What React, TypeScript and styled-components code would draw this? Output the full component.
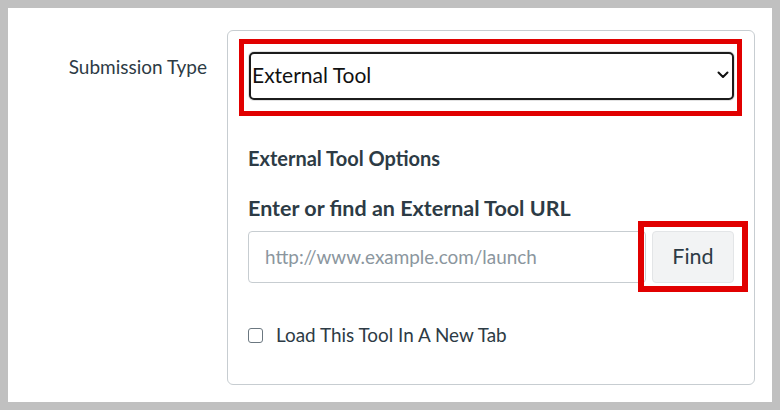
import React from 'react';
import styled, { createGlobalStyle } from 'styled-components';

const GlobalStyle = createGlobalStyle`
  html, body { margin: 0; padding: 0; background: #c0c0c0; }
  body { font-family: Lato, "Noto Sans", sans-serif; color: #2d3b45; }
  * { box-sizing: border-box; }
`;

const Frame = styled.div`
  width: 780px;
  height: 410px;
  padding: 8px;
  background: #c0c0c0;
`;

const Page = styled.div`
  background: #ffffff;
  height: 394px;
  display: grid;
  grid-template-columns: 199px 528px;
  column-gap: 20px;
  align-items: start;
  padding-top: 22px;
`;

const FieldLabel = styled.div`
  text-align: right;
  font-size: 19px;
  line-height: 24px;
  padding-top: 25px;
  color: #2d3b45;
`;

const Card = styled.div`
  height: 355px;
  border: 1px solid #c7cdd1;
  border-radius: 6px;
  padding: 21px 20px 0 20px;
  display: flex;
  flex-direction: column;
`;

const SelectWrap = styled.div`
  position: relative;
  height: 48px;
  margin-left: 1px;
`;

const Select = styled.select`
  appearance: none;
  width: 100%;
  height: 48px;
  border: 2px solid #1c1c1c;
  border-radius: 5px;
  box-shadow: 0 0 0 1px #e2e2e2;
  background: #fff;
  font-family: Lato, "Noto Sans", sans-serif;
  font-size: 21px;
  color: #111;
  padding: 0 30px 3px 1px;
  outline: none;
`;

const Chevron = styled.svg`
  position: absolute;
  right: 5px;
  top: 18px;
  width: 12px;
  height: 10px;
  pointer-events: none;
`;

const Highlight = styled.div<{ $t: number; $r: number; $b: number; $l: number; $w: number }>`
  position: absolute;
  top: ${(p) => p.$t}px;
  right: ${(p) => p.$r}px;
  bottom: ${(p) => p.$b}px;
  left: ${(p) => p.$l}px;
  border: ${(p) => p.$w}px solid #e10000;
  pointer-events: none;
`;

const SectionTitle = styled.div`
  margin-top: 46px;
  font-weight: 700;
  font-size: 20px;
  line-height: 24px;
  color: #2d3b45;
`;

const UrlTitle = styled.div`
  margin-top: 25px;
  font-weight: 700;
  font-size: 21.5px;
  line-height: 26px;
  color: #2d3b45;
`;

const InputRow = styled.div`
  margin-top: 10px;
  display: flex;
  gap: 6px;
  height: 52px;
`;

const UrlInput = styled.input`
  flex: 1;
  height: 52px;
  border: 1px solid #c7cdd1;
  border-radius: 4px;
  padding: 0 16px 2px 16px;
  font-family: Lato, "Noto Sans", sans-serif;
  font-size: 18.9px;
  color: #2d3b45;
  outline: none;
  &::placeholder { color: #8b969e; }
`;

const ButtonWrap = styled.div`
  position: relative;
`;

const FindButton = styled.button`
  width: 82px;
  height: 52px;
  padding: 0 0 2px 0;
  background: #f2f3f4;
  border: 1px solid #e3e5e7;
  border-radius: 4px;
  font-family: Lato, "Noto Sans", sans-serif;
  font-size: 21.5px;
  color: #2d3b45;
`;

const CheckRow = styled.label`
  margin-top: 42px;
  display: flex;
  align-items: center;
  gap: 13px;
  font-size: 18.9px;
  line-height: 20px;
  color: #2d3b45;
`;

const Box = styled.span`
  width: 15px;
  height: 15px;
  border: 1.5px solid #6b7780;
  border-radius: 3px;
  background: #fff;
  flex: none;
`;

export default function App() {
  return (
    <>
      <GlobalStyle />
      <Frame>
        <Page>
          <FieldLabel>Submission Type</FieldLabel>
          <Card>
            <SelectWrap>
              <Select defaultValue="external">
                <option value="external">External Tool</option>
              </Select>
              <Chevron viewBox="0 0 12 10">
                <path d="M1.5 2.5 L6 7 L10.5 2.5" fill="none" stroke="#111" strokeWidth="2" strokeLinecap="round" strokeLinejoin="round" />
              </Chevron>
              <Highlight $t={-13} $r={-8} $b={-16} $l={-10} $w={5} />
            </SelectWrap>
            <SectionTitle>External Tool Options</SectionTitle>
            <UrlTitle>Enter or find an External Tool URL</UrlTitle>
            <InputRow>
              <UrlInput placeholder="http://www.example.com/launch" />
              <ButtonWrap>
                <FindButton type="button">Find</FindButton>
                <Highlight $t={-10} $r={-14} $b={-9} $l={-14} $w={6} />
              </ButtonWrap>
            </InputRow>
            <CheckRow>
              <Box />
              Load This Tool In A New Tab
            </CheckRow>
          </Card>
        </Page>
      </Frame>
    </>
  );
}
